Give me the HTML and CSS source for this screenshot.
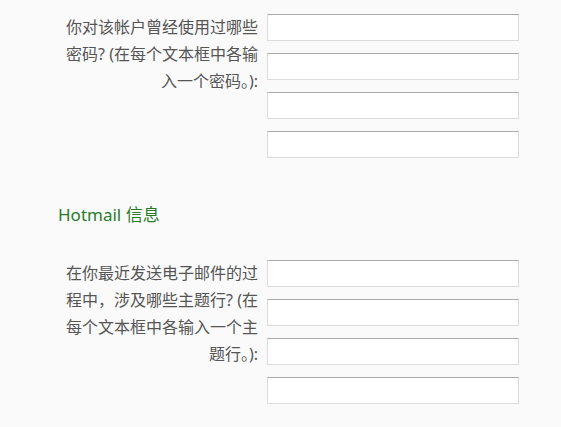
FILE: index.html
```html
<!DOCTYPE html>
<html lang="zh-CN">
<head>
    <meta charset="UTF-8">
    <meta name="viewport" content="width=device-width, initial-scale=1.0">
    <title>帐户恢复</title>
    <link rel="stylesheet" href="styles.css">
</head>
<body>
    <div class="container">
        <div class="field">
            <label class="field-label">你对该帐户曾经使用过哪些密码? (在每个文本框中各输入一个密码。):</label>
            <div class="field-inputs">
                <input type="text">
                <input type="text">
                <input type="text">
                <input type="text">
            </div>
        </div>

        <h2 class="section-title">Hotmail 信息</h2>

        <div class="field">
            <label class="field-label">在你最近发送电子邮件的过程中，涉及哪些主题行? (在每个文本框中各输入一个主题行。):</label>
            <div class="field-inputs">
                <input type="text">
                <input type="text">
                <input type="text">
                <input type="text">
            </div>
        </div>
    </div>
</body>
</html>
```

FILE: styles.css
```css
body {
    margin: 0;
    background-color: #fafafa;
    font-family: "Noto Sans", "Noto Sans CJK SC", sans-serif;
    color: #555;
}

.container {
    padding: 14px 0 0 58px;
}

.field {
    display: flex;
    align-items: flex-start;
}

.field-label {
    width: 200px;
    margin-right: 9px;
    text-align: right;
    font-size: 16px;
    line-height: 27px;
}

.field-inputs {
    display: flex;
    flex-direction: column;
    gap: 12px;
}

.field-inputs input {
    box-sizing: border-box;
    width: 252px;
    height: 27px;
    margin: 0;
    padding: 2px 4px;
    background: #fff;
    border: 1px solid #dcdcdc;
    border-top-color: #a9a9a9;
    border-radius: 0;
    font-size: 14px;
}

.section-title {
    margin: 45px 0 33px;
    font-size: 17px;
    font-weight: normal;
    line-height: 24px;
    color: #2b7a2b;
}
```
